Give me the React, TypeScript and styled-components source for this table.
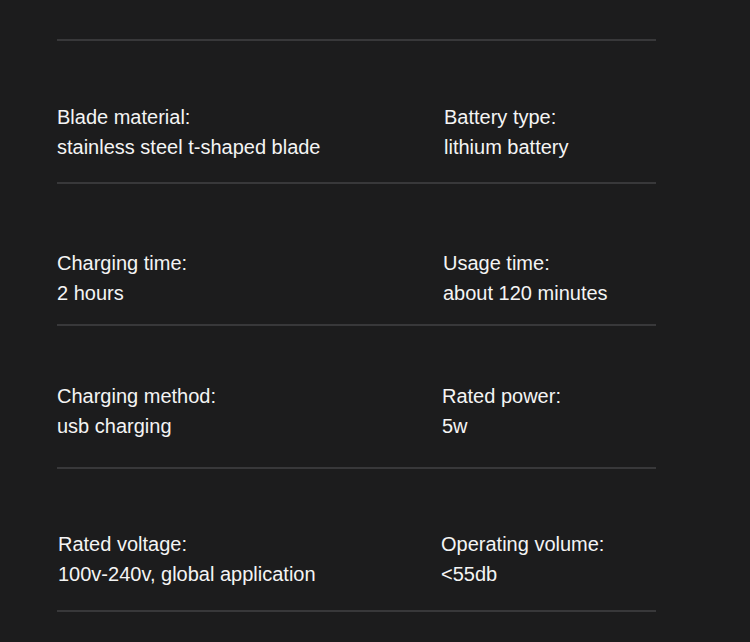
import React from "react";
import styled, { createGlobalStyle } from "styled-components";

const Global = createGlobalStyle`
  html, body {
    margin: 0;
    padding: 0;
    background: #1c1c1d;
  }
  body {
    font-family: "Liberation Sans", Arial, sans-serif;
    -webkit-font-smoothing: antialiased;
  }
`;

const Page = styled.main`
  width: 750px;
  height: 642px;
  box-sizing: border-box;
  padding: 39px 0 0 57px;
  background: #1c1c1d;
  overflow: hidden;
`;

const SpecList = styled.section`
  width: 599px;
  border-top: 2px solid #38383a;
  display: flex;
  flex-direction: column;
`;

const Row = styled.div<{ $top: number; $left: number; $split: number; $height: number }>`
  box-sizing: border-box;
  height: ${(p) => p.$height}px;
  padding-top: ${(p) => p.$top}px;
  padding-left: ${(p) => p.$left}px;
  border-bottom: 2px solid #38383a;
  display: grid;
  grid-template-columns: ${(p) => p.$split}px 1fr;
  align-content: start;
`;

const Cell = styled.div`
  display: flex;
  flex-direction: column;
  color: #f4f4f4;
  font-size: 20px;
  line-height: 30px;
  white-space: nowrap;
`;

const Label = styled.span``;
const Value = styled.span``;

type Spec = { label: string; value: string };
type RowData = {
  top: number;
  left: number;
  split: number;
  height: number;
  cells: [Spec, Spec];
};

const rows: RowData[] = [
  {
    top: 61,
    left: -1,
    split: 387,
    height: 143,
    cells: [
      { label: "Blade material:", value: "stainless steel t-shaped blade" },
      { label: "Battery type:", value: "lithium battery" },
    ],
  },
  {
    top: 64,
    left: -2,
    split: 386,
    height: 142,
    cells: [
      { label: "Charging time:", value: "2 hours" },
      { label: "Usage time:", value: "about 120 minutes" },
    ],
  },
  {
    top: 55,
    left: -1,
    split: 385,
    height: 143,
    cells: [
      { label: "Charging method:", value: "usb charging" },
      { label: "Rated power:", value: "5w" },
    ],
  },
  {
    top: 60,
    left: 1,
    split: 383,
    height: 143,
    cells: [
      { label: "Rated voltage:", value: "100v-240v, global application" },
      { label: "Operating volume:", value: "<55db" },
    ],
  },
];

export default function App() {
  return (
    <>
      <Global />
      <Page>
        <SpecList>
          {rows.map((r, i) => (
            <Row
              key={i}
              $top={r.top}
              $left={r.left}
              $split={r.split}
              $height={r.height}
            >
              {r.cells.map((c) => (
                <Cell key={c.label}>
                  <Label>{c.label}</Label>
                  <Value>{c.value}</Value>
                </Cell>
              ))}
            </Row>
          ))}
        </SpecList>
      </Page>
    </>
  );
}
